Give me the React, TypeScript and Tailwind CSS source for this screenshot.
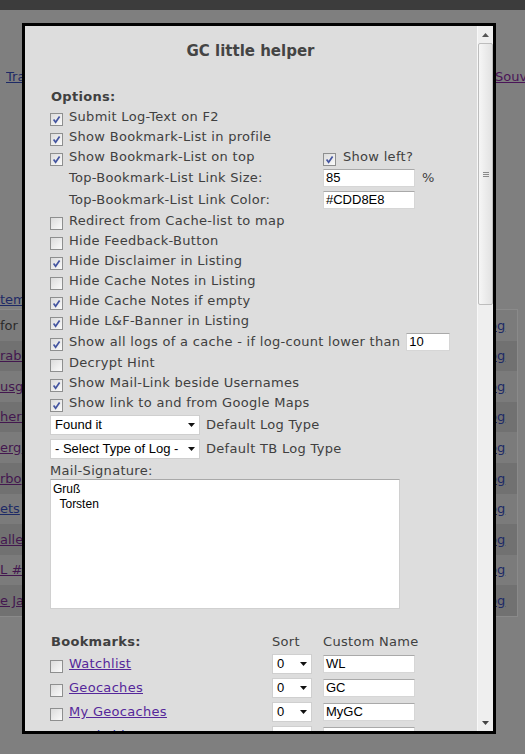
import React from "react";

const font = "font-['DejaVu_Sans',Verdana,sans-serif] text-[13px] tracking-[0.3px]";
const txt = `${font} text-[#404040]`;
const field = "font-['Liberation_Sans',Arial,sans-serif] text-[13px] text-black";

const Check = ({ on }: { on?: boolean }) => (
  <span className="mt-[4px] flex h-[13px] w-[13px] shrink-0 items-center justify-center border border-[#8e8f8f] bg-gradient-to-br from-[#dcdcdc] to-[#fafafa]">
    {on && (
      <svg viewBox="0 0 9 9" className="h-[9px] w-[9px]">
        <path d="M1.6 4.6 L3.6 7.2 L7.6 1.6" stroke="#4455a0" strokeWidth="1.7" fill="none" />
      </svg>
    )}
  </span>
);

const Arrow = () => (
  <svg viewBox="0 0 7 4" className="h-[4px] w-[7px] shrink-0">
    <polygon points="0,0 7,0 3.5,4" fill="#111" />
  </svg>
);

const Input = ({ value, w }: { value: string; w: string }) => (
  <span className={`flex h-[18px] items-center border border-[#d6d6d6] border-t-[#a9a9a9] bg-white pl-[2px] ${w} ${field}`}>
    {value}
  </span>
);

const Select = ({ value, w }: { value: string; w: string }) => (
  <span className={`flex h-[20px] items-center justify-between border border-[#cfcfcf] bg-white pl-[4px] pr-[4px] ${w} ${field}`}>
    <span className="whitespace-nowrap">{value}</span>
    <Arrow />
  </span>
);

const Row = ({ on, text, h = "h-5" }: { on?: boolean; text: string; h?: string }) => (
  <div className={`flex items-center gap-[6px] ${h}`}>
    <Check on={on} />
    <span className={`${txt} whitespace-nowrap`}>{text}</span>
  </div>
);

const bookmarks = [
  { name: "Watchlist", custom: "WL", color: "text-[#55279a]" },
  { name: "Geocaches", custom: "GC", color: "text-[#55279a]" },
  { name: "My Geocaches", custom: "MyGC", color: "text-[#55279a]" },
  { name: "Trackable Stats", custom: "", color: "text-[#1f2fb0]" },
];

const tableRows = [
  { t: "for", c: "text-[#2b2b2b]", no: true },
  { t: "rabu", c: "text-[#43174f]" },
  { t: "usgr", c: "text-[#43174f]" },
  { t: "her K", c: "text-[#43174f]" },
  { t: "erg", c: "text-[#43174f]" },
  { t: "rbo", c: "text-[#43174f]" },
  { t: "ets", c: "text-[#1d2a66]" },
  { t: "alle", c: "text-[#43174f]" },
  { t: "L #", c: "text-[#43174f]" },
  { t: "e Ja", c: "text-[#43174f]" },
];

const Scrollbar = () => (
  <div className="flex w-[16px] shrink-0 flex-col border-l border-[#f8f8f8] bg-[#efefef]">
    <div className="flex h-[17px] items-center justify-center">
      <svg viewBox="0 0 7 4" className="h-[4px] w-[7px]">
        <polygon points="0,4 7,4 3.5,0" fill="#555" />
      </svg>
    </div>
    <div className="flex h-[262px] items-center justify-center rounded-[2px] border border-[#bdbdbd] bg-gradient-to-r from-[#f6f6f6] to-[#e2e2e2]">
      <div className="flex flex-col gap-[1px]">
        <span className="h-px w-[6px] bg-[#8a8a8a]" />
        <span className="h-px w-[6px] bg-[#8a8a8a]" />
        <span className="h-px w-[6px] bg-[#8a8a8a]" />
      </div>
    </div>
    <div className="flex-1" />
    <div className="flex h-[17px] items-center justify-center">
      <svg viewBox="0 0 7 4" className="h-[4px] w-[7px]">
        <polygon points="0,0 7,0 3.5,4" fill="#444" />
      </svg>
    </div>
  </div>
);

export default function App() {
  return (
    <div className="relative h-[754px] w-[525px] overflow-hidden bg-[#7f7f7f] font-['DejaVu_Sans',Verdana,sans-serif] text-[13px]">
      {/* page behind the overlay */}
      <div className="h-[10px] bg-[#3c3c3c]" />
      <div className="mt-[58px] flex h-[18px] items-center whitespace-nowrap">
        <a className="ml-[6px] w-[489px] shrink-0 overflow-hidden text-[#1d2a66] underline">Trackables</a>
        <a className="shrink-0 text-[#4a1458] underline">Souvenirs</a>
      </div>
      <div className="mt-[205px] flex h-[18px] items-center">
        <a className="text-[#1d2a66] underline">tem</a>
      </div>
      <div className="w-[518px] border-y border-r border-[#8a8a8a]">
        {tableRows.map((r, i) => (
          <div key={i} className={`flex h-[30.6px] items-center ${i % 2 ? "bg-[#717171]" : "bg-[#7b7b7b]"}`}>
            <span className={`w-[482px] whitespace-nowrap ${r.c} ${r.no ? "" : "underline"}`}>{r.t}</span>
            <span className="text-[#1d2a66] underline">Log</span>
          </div>
        ))}
      </div>

      {/* modal */}
      <div className="absolute left-[22px] top-[23px] flex h-[711px] w-[474px] border-[3px] border-black bg-[#dddddd]">
        <div className="flex-1 overflow-hidden pl-[25px] pr-[26px]">
          <div className="mt-[15px] flex h-5 items-center justify-center font-['DejaVu_Sans',Verdana,sans-serif] text-[15px] font-bold text-[#444]">
            GC little helper
          </div>
          <div className={`mt-[26px] flex h-5 items-center pl-px font-bold ${txt}`}>Options:</div>
          <Row on text="Submit Log-Text on F2" />
          <Row on text="Show Bookmark-List in profile" />
          <div className="flex h-5 items-center">
            <div className="flex w-[273px] items-center gap-[6px]">
              <Check on />
              <span className={txt}>Show Bookmark-List on top</span>
            </div>
            <div className="flex items-center gap-[7px]">
              <Check on />
              <span className={txt}>Show left?</span>
            </div>
          </div>
          <div className="flex h-[22px] items-center">
            <span className={`w-[273px] pl-[19px] ${txt}`}>Top-Bookmark-List Link Size:</span>
            <Input value="85" w="w-[92px]" />
            <span className={`ml-[7px] ${txt}`}>%</span>
          </div>
          <div className="flex h-[22px] items-center">
            <span className={`w-[273px] pl-[19px] ${txt}`}>Top-Bookmark-List Link Color:</span>
            <Input value="#CDD8E8" w="w-[92px]" />
          </div>
          <Row text="Redirect from Cache-list to map" />
          <Row text="Hide Feedback-Button" />
          <Row on text="Hide Disclaimer in Listing" />
          <Row text="Hide Cache Notes in Listing" />
          <Row on text="Hide Cache Notes if empty" />
          <Row on text="Hide L&F-Banner in Listing" />
          <div className="flex h-[22px] items-center gap-[6px]">
            <Check on />
            <span className={`${txt} whitespace-nowrap`}>Show all logs of a cache - if log-count lower than</span>
            <Input value="10" w="w-[44px]" />
          </div>
          <Row text="Decrypt Hint" />
          <Row on text="Show Mail-Link beside Usernames" />
          <Row on text="Show link to and from Google Maps" />
          <div className="flex h-[24px] items-center gap-[6px]">
            <Select value="Found it" w="w-[150px]" />
            <span className={txt}>Default Log Type</span>
          </div>
          <div className="flex h-[23px] items-center gap-[6px]">
            <Select value="- Select Type of Log -" w="w-[150px]" />
            <span className={txt}>Default TB Log Type</span>
          </div>
          <div className={`mt-[3px] leading-[16px] ${txt}`}>Mail-Signature:</div>
          <div className="h-[130px] w-[350px] whitespace-pre border border-[#d0d0d0] border-t-[#a9a9a9] bg-white px-[2px] pt-[2px] font-['Liberation_Sans',Arial,sans-serif] text-[12px] leading-[15px] text-black">
            {"Gruß\n  Torsten"}
          </div>
          <div className="mt-[23px] flex h-5 items-center">
            <span className={`w-[222px] pl-px font-bold ${txt}`}>Bookmarks:</span>
            <span className={`w-[51px] ${txt}`}>Sort</span>
            <span className={txt}>Custom Name</span>
          </div>
          {bookmarks.map((b) => (
            <div key={b.name} className="flex h-[24px] items-center">
              <div className="flex w-[222px] items-center gap-[6px]">
                <Check />
                <a className={`${font} ${b.color} underline`}>{b.name}</a>
              </div>
              <Select value="0" w="w-[40px]" />
              <span className="ml-[11px]">
                <Input value={b.custom} w="w-[92px]" />
              </span>
            </div>
          ))}
        </div>
        <Scrollbar />
      </div>
    </div>
  );
}
